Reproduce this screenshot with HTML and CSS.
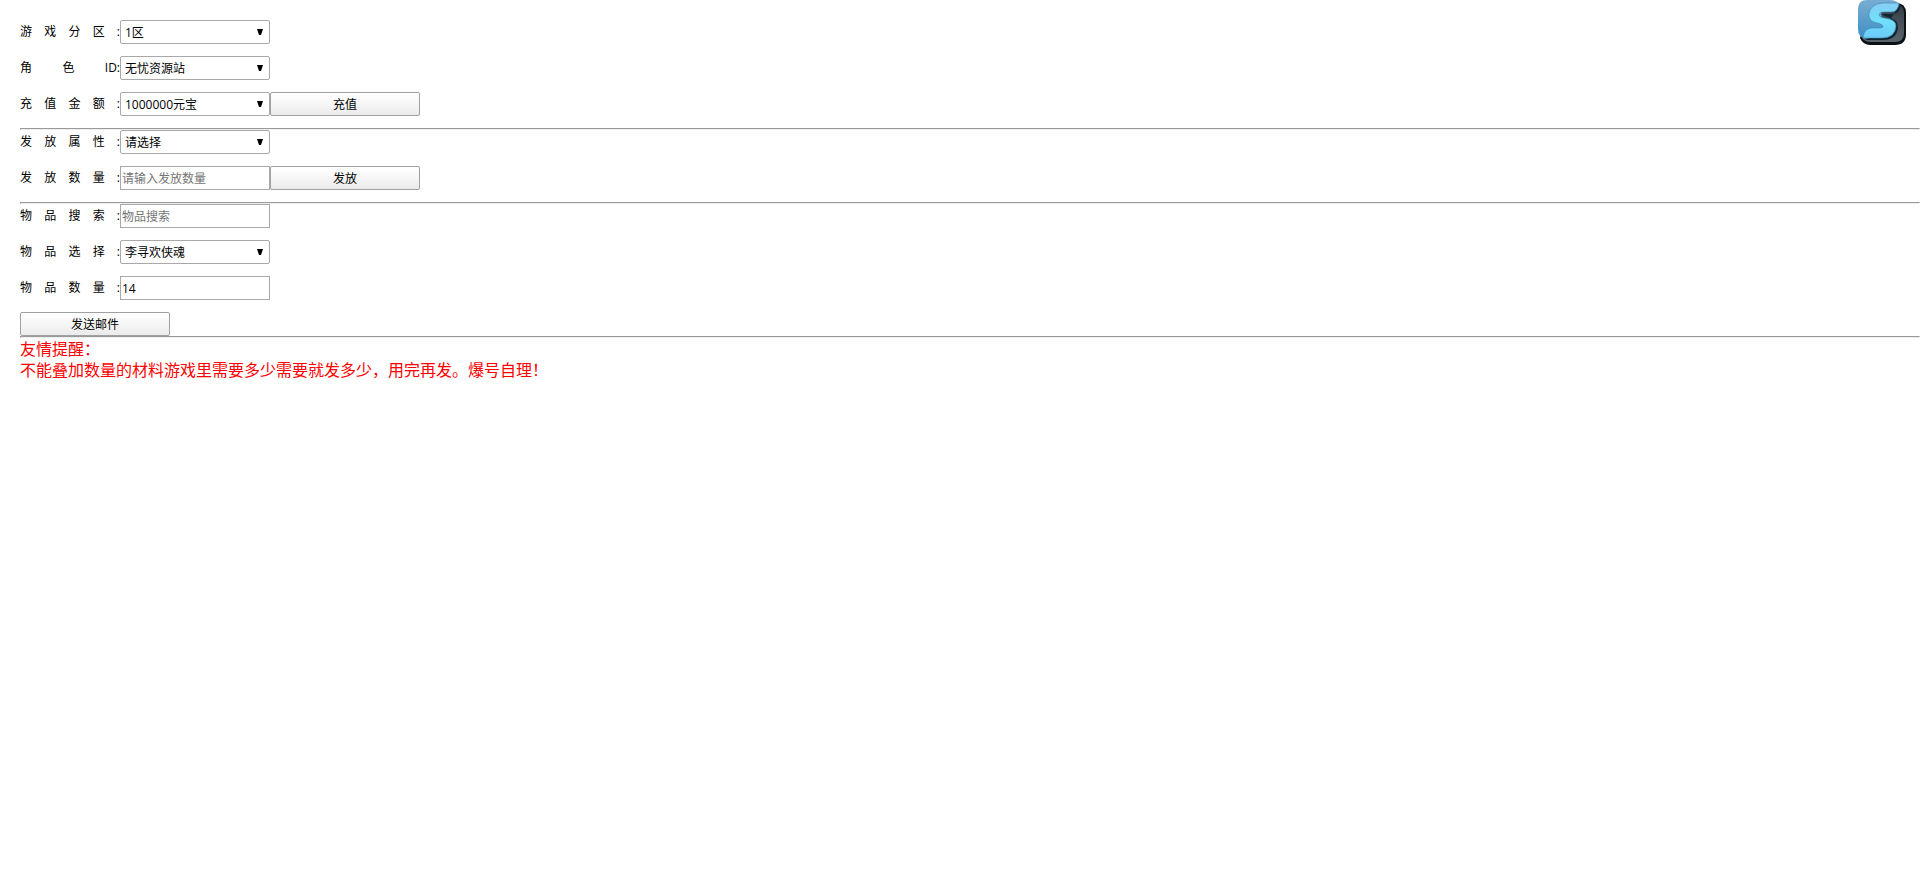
FILE: index.html
```html
<!DOCTYPE html>
<html lang="zh-CN">
<head>
  <meta charset="UTF-8">
  <meta name="viewport" content="width=device-width, initial-scale=1.0">
  <title>GM工具</title>
  <link rel="stylesheet" href="styles.css">
</head>
<body>
  <form class="tool" onsubmit="return false">
    <!-- 充值 -->
    <div class="row">
      <label for="qu">游戏分区:</label>
      <select id="qu"><option>1区</option></select>
    </div>
    <div class="row">
      <label for="role">角色ID:</label>
      <select id="role"><option>无忧资源站</option></select>
    </div>
    <div class="row">
      <label for="money">充值金额:</label>
      <select id="money"><option>1000000元宝</option></select>
      <button type="button">充值</button>
    </div>
    <hr>

    <!-- 属性 -->
    <div class="row">
      <label for="attr">发放属性:</label>
      <select id="attr"><option>请选择</option></select>
    </div>
    <div class="row">
      <label for="attrnum">发放数量:</label>
      <input type="text" id="attrnum" placeholder="请输入发放数量">
      <button type="button">发放</button>
    </div>
    <hr>

    <!-- 物品邮件 -->
    <div class="row">
      <label for="search">物品搜索:</label>
      <input type="text" id="search" placeholder="物品搜索">
    </div>
    <div class="row">
      <label for="item">物品选择:</label>
      <select id="item"><option>李寻欢侠魂</option></select>
    </div>
    <div class="row">
      <label for="itemnum">物品数量:</label>
      <input type="text" id="itemnum" value="14">
    </div>
    <div class="row last">
      <button type="button">发送邮件</button>
    </div>
    <hr>
  </form>

  <p class="tips">友情提醒：<br>不能叠加数量的材料游戏里需要多少需要就发多少，用完再发。爆号自理！</p>

  <svg class="logo" width="50" height="46" viewBox="0 0 50 46" aria-hidden="true">
    <defs>
      <linearGradient id="blue" x1="0" y1="0" x2="0" y2="1">
        <stop offset="0" stop-color="#78add2"/>
        <stop offset="1" stop-color="#3f8fc5"/>
      </linearGradient>
      <linearGradient id="dark" x1="0" y1="0" x2="0" y2="1">
        <stop offset="0" stop-color="#333d45"/>
        <stop offset="1" stop-color="#59646b"/>
      </linearGradient>
      <linearGradient id="letter" gradientUnits="userSpaceOnUse" x1="0" y1="3" x2="0" y2="38">
        <stop offset="0" stop-color="#86cdf2"/>
        <stop offset="0.5" stop-color="#70e0fc"/>
        <stop offset="1" stop-color="#6ccaf5"/>
      </linearGradient>
    </defs>
    <path d="M14 3H39Q49 3 49 13V34Q49 45 38 45H13Q6 45 3 38Z" fill="#0b1014"/>
    <path d="M14 4H38Q47 4 47 13V33Q47 42 38 42H14Q8 42 5 38Z" fill="url(#dark)"/>
    <path d="M10 0H33Q39 0 42 4L34 12H24L26 27L20 38H9Q1 38 1 29V9Q1 0 10 0Z" fill="url(#blue)"/>
    <path d="M44 4Q43 14 35 14H24L30 17Q41 19 41 27Q40 40 26 40H8L24 32Z" fill="#10242f"/>
    <path d="M42 3Q41 12 34 12H27Q22 12 22 15Q22 17 27 18Q39 19 39 26Q38 38 25 38H6Q7 28 15 28H23Q26 28 26 26Q25 24 20 23Q11 21 12 14Q13 4 26 3Z" fill="url(#letter)" stroke="#3c84b0" stroke-width="0.6"/>
  </svg>
</body>
</html>
```

FILE: styles.css
```css
* { margin: 0; padding: 0; box-sizing: border-box; }

body {
  padding: 20px 0 0 20px;
  background: #fff;
  color: #000;
  font-family: "Open Sans", "Noto Sans CJK SC", sans-serif;
  font-size: 12px;
}

.row {
  display: flex;
  align-items: center;
  height: 24px;
  margin-bottom: 12px;
}
.row.last { margin-bottom: 0; }

label {
  width: 100px;
  line-height: 24px;
  text-align: justify;
  text-align-last: justify;
}

select, input, button {
  width: 150px;
  height: 24px;
  border: 1px solid #a9a9a9;
  font-family: inherit;
  font-size: 12px;
  color: #000;
}

select {
  appearance: none;
  padding: 0 20px 0 4px;
  border-radius: 2px;
  background: #fff url("data:image/svg+xml,%3Csvg xmlns='http://www.w3.org/2000/svg' width='6' height='6'%3E%3Cpath d='M0 0H6L4 6H2Z'/%3E%3C/svg%3E") no-repeat right 6px top 8px;
}

input {
  padding: 0 1px;
  background: #fff;
}
input::placeholder { color: #757575; }

button {
  border-color: #a0a0a0;
  border-radius: 2px;
  background: linear-gradient(#fff, #f8f8f8 40%, #ebebeb);
}

hr {
  height: 2px;
  border: 1px solid #9a9a9a;
  border-right-color: #eee;
  border-bottom-color: #eee;
}

.tips {
  color: #f00;
  font-family: "Noto Sans CJK SC", sans-serif;
  font-size: 16px;
  line-height: 21px;
}

.logo {
  position: absolute;
  top: 0;
  right: 13px;
}
```
